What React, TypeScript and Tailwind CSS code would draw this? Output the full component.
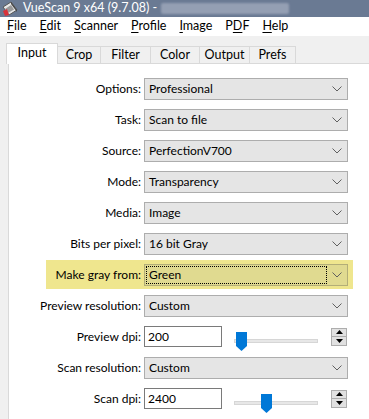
import React from "react";

const menus: [string, string][] = [
  ["F", "ile"],
  ["E", "dit"],
  ["S", "canner"],
  ["P", "rofile"],
  ["I", "mage"],
];

const tabs = [
  { name: "Crop", w: "w-[44px]" },
  { name: "Filter", w: "w-[51px]" },
  { name: "Color", w: "w-[50px]" },
  { name: "Output", w: "w-[51px]" },
  { name: "Prefs", w: "w-[47px]" },
];

const rows = [
  { label: "Options:", value: "Professional" },
  { label: "Task:", value: "Scan to file" },
  { label: "Source:", value: "PerfectionV700" },
  { label: "Mode:", value: "Transparency" },
  { label: "Media:", value: "Image" },
  { label: "Bits per pixel:", value: "16 bit Gray" },
];

const Chevron = () => (
  <svg width="10" height="6" viewBox="0 0 10 6">
    <polyline points="0.5,0.5 5,5 9.5,0.5" fill="none" stroke="#606060" strokeWidth="1" />
  </svg>
);

const Select = ({ value, focused }: { value: string; focused?: boolean }) => (
  <div
    className={`flex h-[22px] w-[204px] items-stretch border ${
      focused ? "border-[#b3ae78] bg-[#e0da90]" : "border-[#adadad] bg-[#e5e5e5]"
    }`}
  >
    <div
      className={`my-[1px] ml-[1px] flex flex-1 items-center border border-dotted pl-[2px] ${
        focused ? "border-black" : "border-transparent"
      }`}
    >
      {value}
    </div>
    <div className="flex w-[20px] items-center justify-center">
      <Chevron />
    </div>
  </div>
);

const Spinner = () => (
  <div className="flex h-[18px] w-[16px] flex-col">
    <div className="flex h-[9px] items-center justify-center border border-[#adadad] bg-[#e1e1e1]">
      <svg width="7" height="4" viewBox="0 0 7 4">
        <polygon points="3.5,0 7,4 0,4" fill="#000" />
      </svg>
    </div>
    <div className="-mt-px flex h-[10px] items-center justify-center border border-[#adadad] bg-[#e1e1e1]">
      <svg width="7" height="4" viewBox="0 0 7 4">
        <polygon points="0,0 7,0 3.5,4" fill="#000" />
      </svg>
    </div>
  </div>
);

const DpiControl = ({ value, thumb }: { value: string; thumb: number }) => (
  <div className="flex items-center">
    <div className="flex h-[21px] w-[78px] items-center border border-[#7a7a7a] bg-white pl-[3px]">{value}</div>
    <div className="relative ml-[12px] h-[21px] w-[84px]">
      <div className="absolute left-0 right-0 top-[13px] h-[4px] border border-[#d6d6d6] bg-[#e7e7e7]" />
      <svg className="absolute top-[6px]" style={{ left: thumb }} width="11" height="19" viewBox="0 0 11 19">
        <path d="M0 0H11V14L5.5 19L0 14Z" fill="#0078d7" />
      </svg>
    </div>
    <div className="ml-[13px]">
      <Spinner />
    </div>
  </div>
);

const Row = ({ label, children }: { label: string; children: React.ReactNode }) => (
  <div className="flex h-[31px] items-center">
    <div className="w-[135px] pr-[3px] text-right">{label}</div>
    {children}
  </div>
);

const AppIcon = () => (
  <svg width="16" height="16" viewBox="0 0 16 16">
    <path d="M1 6L9 1L15 9L7 14Z" fill="#e8e8e8" stroke="#555" strokeWidth="1" />
    <path d="M3 8L9 4L12 8.5L6 12Z" fill="#9a9a9a" />
    <path d="M1 10L5 8L7 14L3 15Z" fill="#d8323a" />
    <path d="M9 1L15 9L15 11L9 3Z" fill="#444" />
  </svg>
);

export default function App() {
  return (
    <div className="h-[419px] w-[369px] overflow-hidden bg-[#f0f0f0] font-[Lato,sans-serif] text-[12px] text-black">
      {/* title bar */}
      <div className="flex h-[17px] items-center bg-[#6a7a93] pl-[2px] text-white">
        <AppIcon />
        <span className="ml-[5px] text-[12.5px]">VueScan 9 x64 (9.7.08) -</span>
        <div className="ml-[4px] h-[11px] w-[128px] rounded-[2px] bg-[#949fb3] blur-[1px]" />
      </div>

      {/* menu bar */}
      <div className="flex h-[19px] items-center bg-white pl-[7px] text-[12.5px]">
        {menus.map(([k, rest]) => (
          <span key={k + rest} className="mr-[13px]">
            <span className="underline underline-offset-2">{k}</span>
            {rest}
          </span>
        ))}
        <span className="mr-[13px]">
          P<span className="underline underline-offset-2">D</span>F
        </span>
        <span>
          <span className="underline underline-offset-2">H</span>elp
        </span>
      </div>

      {/* tabs */}
      <div className="mt-[7px] flex h-[20px] items-end pl-[6px]">
        <div className="relative z-10 -mb-px flex h-[21px] w-[52px] items-center justify-center border-x border-t border-[#d9d9d9] bg-white pb-[2px] text-[12.5px]">
          Input
        </div>
        {tabs.map((t) => (
          <div
            key={t.name}
            className={`-ml-px flex h-[17px] ${t.w} items-center justify-center border-x border-t border-[#d9d9d9] bg-[#f0f0f0] text-[12.5px]`}
          >
            {t.name}
          </div>
        ))}
      </div>

      {/* panel */}
      <div className="ml-[8px] h-[400px] border-l border-t border-[#d9d9d9] bg-white pt-[9px] text-[12px]">
        {rows.map((r) => (
          <Row key={r.label} label={r.label}>
            <Select value={r.value} />
          </Row>
        ))}

        <div className="flex h-[31px] items-center">
          <div className="ml-[37px] flex h-[29px] w-[307px] items-center bg-[#efe68e]">
            <div className="w-[98px] pr-[3px] text-right">Make gray from:</div>
            <Select value="Green" focused />
          </div>
        </div>

        <Row label="Preview resolution:">
          <Select value="Custom" />
        </Row>
        <Row label="Preview dpi:">
          <DpiControl value="200" thumb={2} />
        </Row>
        <Row label="Scan resolution:">
          <Select value="Custom" />
        </Row>
        <Row label="Scan dpi:">
          <DpiControl value="2400" thumb={27} />
        </Row>
      </div>
    </div>
  );
}
